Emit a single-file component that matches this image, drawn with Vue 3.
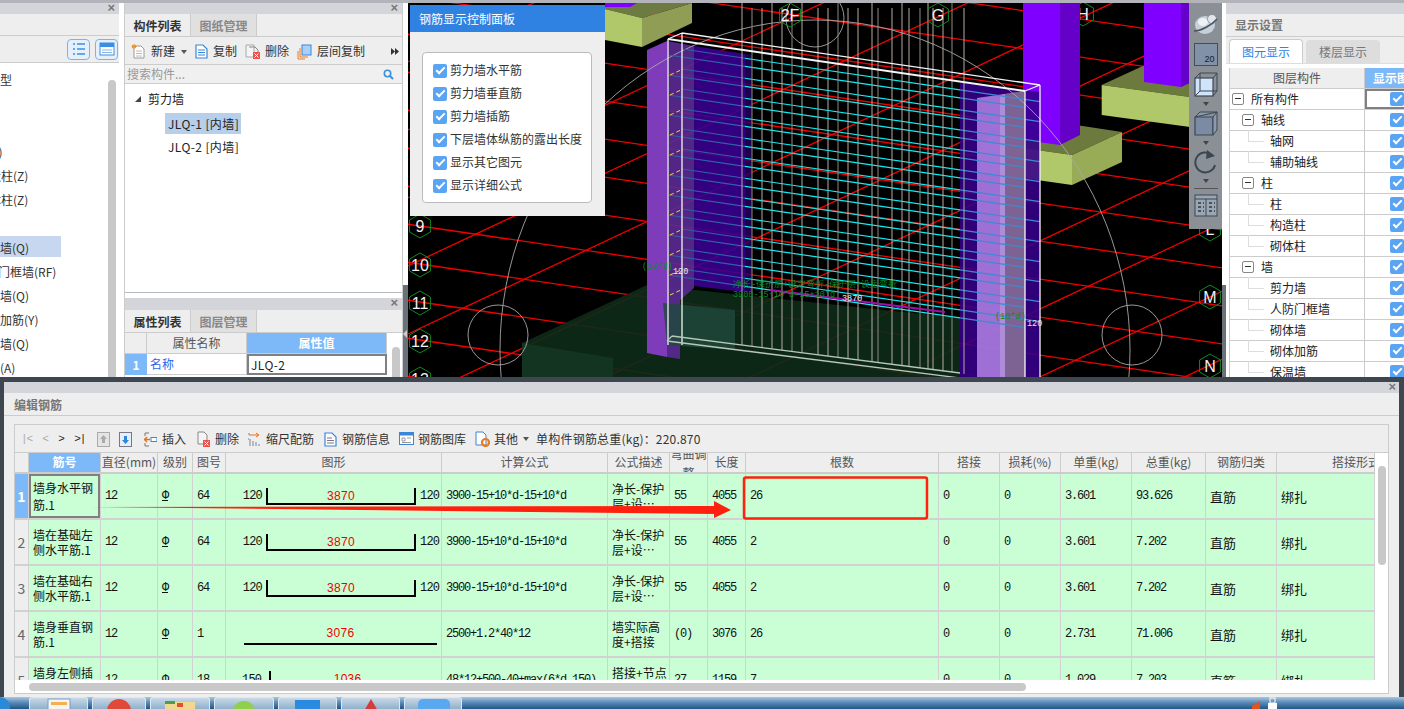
<script setup>
const redA = []
for (let k = -8; k <= 5; k++) redA.push({ y1: 226 + 38 * k + 0.147 * (408 - 420), y2: 226 + 38 * k + 0.147 * (1222 - 420) })
const redB = []
for (let k = -15; k <= 3; k++) redB.push({ y1: 297 + 68 * k - 0.47 * (408 - 1210), y2: 297 + 68 * k - 0.47 * (1222 - 1210) })
const hex = (cx, cy, r) => [0, 1, 2, 3, 4, 5].map(i => {
  const a = Math.PI / 3 * i + Math.PI / 6
  return (cx + r * Math.cos(a)).toFixed(1) + ',' + (cy + r * Math.sin(a)).toFixed(1)
}).join(' ')
const mkLabel = l => ({ ...l, pts: hex(l.x, l.y, 12) })
const labels = [
  { t: '9', x: 420, y: 226 }, { t: '10', x: 420, y: 265 }, { t: '11', x: 420, y: 303 }, { t: '12', x: 420, y: 341 }, { t: '13', x: 420, y: 379 },
  { t: '2F', x: 790, y: 15 }, { t: 'G', x: 938, y: 15 }, { t: 'L', x: 1210, y: 229 }, { t: 'M', x: 1210, y: 297 }, { t: 'N', x: 1210, y: 366 }
].map(mkLabel)
const backLabel = mkLabel({ t: 'H', x: 1083, y: 14 })
const lineAt = (x0, y0, x) => y0 + 0.147 * (x - x0)
const hbars = []
for (let i = 0; i < 12; i++) {
  const set = [{ x: 682, y: 49 + 20 * i, e: 1040 }, { x: 668, y: 55 + 20 * i, e: 1025 }]
  set.forEach(s => {
    hbars.push({ x1: s.x, y1: lineAt(s.x, s.y, s.x), x2: 745, y2: lineAt(s.x, s.y, 745), c: '#2f62a8' })
    hbars.push({ x1: 745, y1: lineAt(s.x, s.y, 745), x2: 960, y2: lineAt(s.x, s.y, 960), c: '#10eef2' })
    hbars.push({ x1: 960, y1: lineAt(s.x, s.y, 960), x2: s.e, y2: lineAt(s.x, s.y, s.e), c: '#3d8ad0' })
  })
}
const vbars = [742, 752, 762, 772, 782, 792, 802, 818, 828, 838, 848, 858, 872, 878, 892, 902, 909, 920, 928, 933, 943, 952, 964].map((x, i) => ({
  x, y1: i % 3 === 0 ? 3 : 8, y2: 345 + (x - 742) * 0.13, c: i % 4 === 1 ? '#8f8a80' : '#b5ad9f'
}))
const ticks = Array.from({ length: 12 }, (_, i) => 73 + 20 * i)

const leftRows = [
  { t: '常用构件类型', m: -60 }, { t: '' }, { t: '' }, { t: '轴网(J)', m: -36 },
  { t: '构造柱(Z)', m: -23 }, { t: '砌体柱(Z)', m: -23 }, { t: '' },
  { t: '剪力墙(Q)', m: -24, sel: true }, { t: '人防门框墙(RF)', m: -26 }, { t: '砌体墙(Q)', m: -24 },
  { t: '砌体加筋(Y)', m: -24 }, { t: '保温墙(Q)', m: -24 }, { t: '暗梁(A)', m: -24 }
]
const panelChecks = ['剪力墙水平筋', '剪力墙垂直筋', '剪力墙插筋', '下层墙体纵筋的露出长度', '显示其它图元', '显示详细公式']
const layerRows = [
  { t: '所有构件', l: 1, first: true }, { t: '轴线', l: 2 }, { t: '轴网', l: 3 }, { t: '辅助轴线', l: 3 },
  { t: '柱', l: 2 }, { t: '柱', l: 3 }, { t: '构造柱', l: 3 }, { t: '砌体柱', l: 3 }, { t: '墙', l: 2 },
  { t: '剪力墙', l: 3 }, { t: '人防门框墙', l: 3 }, { t: '砌体墙', l: 3 }, { t: '砌体加筋', l: 3 }, { t: '保温墙', l: 3 }
]
const cols = [14, 72, 57, 35, 33, 216, 166, 62, 38, 38, 193, 61, 61, 71, 74, 71, 98]
const heads = ['', '筋号', '直径(mm)', '级别', '图号', '图形', '计算公式', '公式描述', '弯曲调整', '长度', '根数', '搭接', '损耗(%)', '单重(kg)', '总重(kg)', '钢筋归类', '搭接形式']
const rows = [
  { n: 1, name: ['墙身水平钢', '筋.1'], fig: 64, shape: 'u', len: '3870', f: '3900-15+10*d-15+10*d', d: ['净长-保护', '层+设…'], b: '55', l: '4055', c: '26', u: '3.601', tot: '93.626' },
  { n: 2, name: ['墙在基础左', '侧水平筋.1'], fig: 64, shape: 'u', len: '3870', f: '3900-15+10*d-15+10*d', d: ['净长-保护', '层+设…'], b: '55', l: '4055', c: '2', u: '3.601', tot: '7.202' },
  { n: 3, name: ['墙在基础右', '侧水平筋.1'], fig: 64, shape: 'u', len: '3870', f: '3900-15+10*d-15+10*d', d: ['净长-保护', '层+设…'], b: '55', l: '4055', c: '2', u: '3.601', tot: '7.202' },
  { n: 4, name: ['墙身垂直钢', '筋.1'], fig: 1, shape: 'l', len: '3076', f: '2500+1.2*40*12', d: ['墙实际高', '度+搭接'], b: '(0)', l: '3076', c: '26', u: '2.731', tot: '71.006' },
  { n: 5, name: ['墙身左侧插', '筋.1'], fig: 18, shape: 'h', len: '1036', f: '48*12+500-40+max(6*d,150)', d: ['搭接+节点', '设置…'], b: '27', l: '1159', c: '7', u: '1.029', tot: '7.203' }
]
const taskBtns = [59, 54, 60, 60, 59, 59, 58]
</script>

<template>
  <div class="app">
    <div class="top">
      <!-- left navigation panel (cut by the window edge) -->
      <section class="left">
        <div class="bar"><span class="close">×</span></div>
        <div class="blank-row"></div>
        <div class="left-tools">
          <span class="blue-btn">
            <svg width="14" height="14" viewBox="0 0 14 14"><g fill="none" stroke="#3a8ee6" stroke-width="1.3"><path d="M1 2h2M5 2h8M1 7h2M5 7h8M1 12h2M5 12h8"/></g></svg>
          </span>
          <span class="blue-btn">
            <svg width="16" height="14" viewBox="0 0 16 14"><rect x="1" y="1" width="14" height="12" fill="#fff" stroke="#3a8ee6"/><rect x="1" y="1" width="14" height="4" fill="#3a8ee6"/><path d="M3 8h10M3 10.500h10" stroke="#8ab8ea"/></svg>
          </span>
        </div>
        <div class="left-tree">
          <div class="left-list">
            <div v-for="(r, i) in leftRows" :key="i" class="left-row">
              <div class="left-cell" :class="{ sel: r.sel }"><span class="nowrap" :style="{ marginLeft: (r.m || 0) + 'px' }">{{ r.t }}</span></div>
            </div>
          </div>
          <div class="left-scroll"></div>
        </div>
      </section>
      <div class="gap5"></div>

      <!-- component list + attribute list -->
      <section class="mid">
        <div class="bar"><span class="close">×</span></div>
        <div class="tabs">
          <span class="tab on">构件列表</span><span class="tab">图纸管理</span>
        </div>
        <div class="mid-tools">
          <span class="mt new">
            <svg width="15" height="15" viewBox="0 0 15 15"><path d="M3 2h7l3 3v9H3z" fill="#fff" stroke="#999"/><path d="M5 7h6M5 9.500h6M5 12h6" stroke="#bbb"/><path d="M3 0v5M0.500 2.500h5M1 1l4 3M5 1L1 4" stroke="#f09020"/></svg>
            新建<i class="caret"></i>
          </span>
          <span class="mt">
            <svg width="13" height="15" viewBox="0 0 13 15"><path d="M1 1h7l4 4v9H1z" fill="#fff" stroke="#3a86d8" stroke-width="1.2"/><path d="M3 6h7M3 8.500h7M3 11h7" stroke="#3a86d8"/></svg>
            复制
          </span>
          <span class="mt">
            <svg width="15" height="15" viewBox="0 0 15 15"><path d="M1 1h8v12H1z" fill="#f4f4f4" stroke="#aaa"/><path d="M4 3h6l3 3v7" fill="none" stroke="#888"/><rect x="8" y="8" width="7" height="7" fill="#e9534c"/><path d="M9.500 9.500l4 4M13.500 9.500l-4 4" stroke="#fff"/></svg>
            删除
          </span>
          <span class="mt">
            <svg width="15" height="16" viewBox="0 0 15 16"><rect x="5" y="1" width="9" height="10" fill="#a9d0fb" stroke="#3a86d8"/><path d="M3 4v9h8M1 7v8h7" fill="none" stroke="#f07828"/></svg>
            层间复制
          </span>
          <svg class="more" width="8" height="7" viewBox="0 0 8 7"><path d="M0 0l4 3.500L0 7zM4 0l4 3.500L4 7z" fill="#333"/></svg>
        </div>
        <div class="search">
          <span>搜索构件...</span>
          <svg width="11" height="11" viewBox="0 0 11 11"><circle cx="4.500" cy="4.500" r="3.200" fill="none" stroke="#3a90e0" stroke-width="1.600"/><path d="M7 7l3 3" stroke="#3a90e0" stroke-width="2"/></svg>
        </div>
        <div class="mid-tree">
          <div class="tree-row root"><i class="tri"></i>剪力墙</div>
          <div class="tree-row leaf"><span class="hl">JLQ-1 [内墙]</span></div>
          <div class="tree-row leaf"><span class="pl">JLQ-2 [内墙]</span></div>
        </div>
        <div class="split-h"></div>
        <div class="bar attr-bar"><span class="close">×</span></div>
        <div class="tabs">
          <span class="tab on">属性列表</span><span class="tab">图层管理</span>
        </div>
        <div class="attr">
          <div class="attr-grid">
            <div class="ah corner"></div><div class="ah">属性名称</div><div class="ah blue">属性值</div>
            <div class="rn">1</div><div class="ac link">名称</div><div class="ac val">JLQ-2</div>
          </div>
          <div class="attr-scroll"><div class="thumb"></div></div>
        </div>
      </section>

      <div class="splitter"><div class="sp-top"></div><div class="sp-bot"><i class="sp-arrow"></i></div></div>

      <!-- 3D view -->
      <section class="view">
        <svg class="scene" width="814" height="374" viewBox="408 3 814 374">
          <rect x="408" y="3" width="814" height="374" fill="#000"/>
          <g stroke="#f00000" stroke-width="1.300">
            <line v-for="(l, i) in redA" :key="'a' + i" x1="408" :y1="l.y1" x2="1222" :y2="l.y2"/>
            <line v-for="(l, i) in redB" :key="'b' + i" x1="408" :y1="l.y1" x2="1222" :y2="l.y2"/>
          </g>
          <polygon :points="backLabel.pts" fill="none" stroke="#0f8a20" stroke-width="1"/>
          <text :x="backLabel.x" :y="backLabel.y + 6" text-anchor="middle" fill="#f0f0f0" font-family="Liberation Sans, sans-serif" font-size="16">{{ backLabel.t }}</text>
          <!-- olive footings -->
          <polygon points="605,3 692,3 642,18 605,9" fill="#6d7a42"/>
          <polygon points="605,9 642,18 642,47 605,40" fill="#b0c76a"/>
          <polygon points="642,18 692,3 692,23 642,47" fill="#8f9e54"/>
          <polygon points="605,3 637,3 630,7 605,7" fill="#7f00ff"/>
          <polygon points="980,142 1030,118 1122,132 1072,155" fill="#6c7a3e"/>
          <polygon points="980,142 1072,155 1072,185 980,172" fill="#b0c76a"/>
          <polygon points="1072,155 1122,132 1122,162 1072,185" fill="#98ac58"/>
          <polygon points="1101.700,85 1145,65 1190,70 1190,97" fill="#6c7a3e"/>
          <polygon points="1101.700,85 1190,97 1190,127 1101.700,115" fill="#b0c76a"/>
          <!-- purple columns -->
          <polygon points="1023,3 1060,3 1060,145 1023,140" fill="#7f00ff"/>
          <polygon points="1060,3 1080,3 1080,135 1060,145" fill="#6400c8"/>
          <polygon points="1144,3 1181,3 1181,87 1144,82" fill="#7f00ff"/>
          <polygon points="1181,3 1190,3 1190,83 1181,87" fill="#6400c8"/>
          <!-- foundation -->
          <polygon points="522,343 647,285 960,318 960,377 522,377" fill="#0e2a19" opacity="0.92"/>
          <polygon points="522,343 613,358 613,377 522,377" fill="#123420"/>
          <!-- wall volume -->
          <polygon points="694,46 745,54 745,292 694,286" fill="#3a0090" opacity="0.9"/>
          <polygon points="745,54 752,55 752,293 745,292" fill="#250060" opacity="0.8"/>
          <polygon points="647,50 667,41 667,357 647,353" fill="#7e3cba"/>
          <polygon points="667,41 694,46 694,288 680,300 680,359 667,357" fill="#5b2a93" opacity="0.9"/>
          <polygon points="663,303 735,310 735,350 667,345" fill="#1f4a3c" opacity="0.8"/>
          <polygon points="960,82 1040,92 1040,377 960,377" fill="#35008a" opacity="0.88"/>
          <polygon points="977,98 1025,91 1025,377 977,377" fill="#b284e6" opacity="0.85"/>
          <polygon points="1000,95 1005,94 1005,377 1000,377" fill="#c0a8d8" opacity="0.5"/>
          <polygon points="1005,94 1025,91 1025,377 1005,377" fill="#6b5a70" opacity="0.65"/>
          <!-- arc and circles -->
          <g fill="none" stroke="#a8a8a8" stroke-width="0.900">
            <ellipse cx="815" cy="350" rx="315" ry="330"/>
            <circle cx="498" cy="335" r="30"/>
            <circle cx="1132" cy="335" r="30"/>
            <circle cx="815" cy="18" r="29"/>
          </g>
          <!-- rebars -->
          <g stroke-width="1.200">
            <line v-for="(b, i) in hbars" :key="'h' + i" :x1="b.x1" :y1="b.y1" :x2="b.x2" :y2="b.y2" :stroke="b.c"/>
          </g>
          <g stroke-width="1">
            <line v-for="(b, i) in vbars" :key="'v' + i" :x1="b.x" :y1="b.y1" :x2="b.x" :y2="b.y2" :stroke="b.c"/>
          </g>
          <g stroke="#f0e020" stroke-width="1" stroke-dasharray="4 3">
            <line v-for="t in ticks" :key="'t' + t" x1="670" :y1="t + 2" x2="681" :y2="t - 3"/>
          </g>
          <!-- wall frame -->
          <g fill="none" stroke="#f4f4f4" stroke-width="1.300">
            <path d="M682 33L1040 85M1040 85V377M1025 91V377M668 39V345M682 33V345M668 39L682 33M1025 91L1040 85"/>
            <path d="M668 39L1025 91" stroke-width="2"/>
          </g>
          <g fill="none" stroke="#b8c8b8" stroke-width="1.300">
            <path d="M667 341L960 378M672 336L960 373M667 341L672 336"/>
          </g>
          <line x1="770" y1="290" x2="945" y2="312" stroke="#a010a8" stroke-width="2"/>
          <!-- dimension texts -->
          <g font-family="Liberation Mono, monospace" font-size="8.500">
            <text x="642" y="269" fill="#0c8a20">(10*d)</text>
            <text x="673" y="274" fill="#e8e8e8">120</text>
            <text x="733" y="287" fill="#0c8a20">净长-保护层+设定弯折-保护层+设定弯折</text>
            <text x="733" y="297" fill="#0c8a20">3900-15+10*d-15+10*d</text>
            <text x="842" y="301" fill="#e8e8e8">3870</text>
            <text x="995" y="319" fill="#0c8a20">(10*d)</text>
            <text x="1027" y="326" fill="#e8e8e8">120</text>
          </g>
          <!-- axis labels -->
          <g v-for="l in labels" :key="l.t">
            <polygon :points="l.pts" fill="none" stroke="#0f8a20" stroke-width="1"/>
            <text :x="l.x" :y="l.y + 6" text-anchor="middle" fill="#f0f0f0" font-family="Liberation Sans, sans-serif" font-size="16">{{ l.t }}</text>
          </g>
        </svg>

        <!-- floating rebar control panel -->
        <div class="float">
          <div class="float-title">钢筋显示控制面板</div>
          <div class="float-body">
            <div class="float-box">
              <label v-for="c in panelChecks" :key="c" class="fc"><span class="cb"></span>{{ c }}</label>
            </div>
          </div>
        </div>

        <!-- floating view toolbar -->
        <div class="vt">
          <svg width="24" height="22" viewBox="0 0 24 22"><ellipse cx="11" cy="12" rx="10" ry="9" fill="#c6d0da"/><ellipse cx="9" cy="9" rx="5" ry="4" fill="#eef2f6"/><circle cx="18" cy="6" r="4.500" fill="#dfe5ec" stroke="#6d7680" stroke-width="0.600"/><path d="M0 18C7 18 18 12 23 6" fill="none" stroke="#4a5560" stroke-width="1.500"/></svg>
          <div class="vt-square">20</div>
          <svg width="24" height="25" viewBox="0 0 24 25"><rect x="1" y="6" width="18" height="18" fill="#cfe3fb" stroke="#3c4650" stroke-width="1.200"/><path d="M1 6L6 1H23V19L19 24M19 6L23 1M6 1V19H23M1 24L6 19" fill="none" stroke="#3c4650" stroke-width="1"/></svg>
          <i class="vt-caret"></i>
          <svg width="24" height="25" viewBox="0 0 24 25"><path d="M1 6H19V24H1z" fill="#7b8ba3" stroke="#3c4650" stroke-width="1.200"/><path d="M1 6L6 1H23V19L19 24V6L23 1z" fill="#8b9ab0" stroke="#3c4650" stroke-width="1"/></svg>
          <i class="vt-caret"></i>
          <svg width="24" height="24" viewBox="0 0 24 24"><path d="M18 5A10 10 0 1 0 21 15" fill="none" stroke="#3c4650" stroke-width="2"/><path d="M13 0l8 6-9 3z" fill="#3c4650"/></svg>
          <i class="vt-caret"></i>
          <div class="vt-sep"></div>
          <svg width="24" height="23" viewBox="0 0 24 23"><rect x="1" y="1" width="22" height="21" fill="#9aa6b4" stroke="#3c4650"/><path d="M1 5H23M12 5V22" stroke="#3c4650"/><path d="M4 9h3M4 13h3M4 17h3M9 9h1M9 13h1M9 17h1M15 9h3M15 13h3M15 17h3M20 9h1M20 13h1M20 17h1" stroke="#2e3840" stroke-width="1.300"/></svg>
        </div>
      </section>

      <div class="splitter thin"><div class="sp-top"></div><div class="sp-bot"></div></div>

      <!-- display settings -->
      <section class="right">
        <div class="bar"></div>
        <div class="r-title">显示设置</div>
        <div class="r-tabs">
          <span class="r-tab on">图元显示</span><span class="r-tab">楼层显示</span>
        </div>
        <div class="r-table">
          <div class="r-row head"><div class="r-c1">图层构件</div><div class="r-c2 blue">显示图元</div></div>
          <div v-for="(r, i) in layerRows" :key="i" class="r-row">
            <div class="r-c1" :class="'lv' + r.l">
              <i v-if="r.l < 3" class="pm"></i>
              <span>{{ r.t }}</span>
            </div>
            <div class="r-c2" :class="{ act: r.first }"><span class="cb"></span></div>
          </div>
        </div>
      </section>
    </div>

    <!-- rebar editor dialog -->
    <section class="dlg">
      <div class="bar"><span class="close d-close">×</span></div>
      <div class="d-title">编辑钢筋</div>
      <div class="d-box">
        <div class="d-tools">
          <div class="nav"><span class="dim1">|&lt;</span><span class="dim1">&lt;</span><span>&gt;</span><span>&gt;|</span></div>
          <svg class="ti first" width="13" height="15" viewBox="0 0 13 15"><rect x="0.500" y="0.500" width="12" height="14" fill="#e4e4e4" stroke="#aaa"/><path d="M6.500 3L3 7h2v4h3V7h2z" fill="#aaa"/></svg>
          <svg class="ti" width="13" height="15" viewBox="0 0 13 15"><rect x="0.500" y="0.500" width="12" height="14" fill="#e8eef6" stroke="#778"/><path d="M6.500 12L3 8h2V4h3v4h2z" fill="#2a86e0"/></svg>
          <span class="ti-item insert">
            <svg width="13" height="15" viewBox="0 0 13 15"><path d="M5 1H1M5 14H1M1 1v3M1 11v3" stroke="#777" fill="none"/><path d="M6 7.500H1M3 5L0.500 7.500 3 10" stroke="#f07010" stroke-width="1.400" fill="none"/><rect x="7" y="5.500" width="6" height="4" fill="#fff" stroke="#3a86d8"/></svg>
            插入
          </span>
          <span class="ti-item del">
            <svg width="13" height="16" viewBox="0 0 13 16"><path d="M1 1h6l3 3v9H1z" fill="#f4f4f4" stroke="#888"/><rect x="6" y="9" width="7" height="7" fill="#e9534c"/><path d="M7.500 10.500l4 4M11.500 10.500l-4 4" stroke="#fff"/></svg>
            删除
          </span>
          <span class="ti-item">
            <svg width="13" height="15" viewBox="0 0 13 15"><path d="M1 3h9M8 1l3 2-3 2" stroke="#f07010" fill="none"/><path d="M1 1v2M2 7v7M5 9v5M8 10v4M11 12v2" stroke="#8a98a8" stroke-width="1.200"/><path d="M0 6v2" stroke="#3a86d8"/></svg>
            缩尺配筋
          </span>
          <span class="ti-item info">
            <svg width="13" height="15" viewBox="0 0 13 15"><path d="M1 1h7l4 4v9H1z" fill="#fff" stroke="#3a86d8" stroke-width="1.2"/><path d="M3 6h5M3 8.500h7M3 11h7" stroke="#778"/></svg>
            钢筋信息
          </span>
          <span class="ti-item wide">
            <svg width="15" height="13" viewBox="0 0 15 13"><rect x="0.500" y="0.500" width="14" height="12" fill="#fff" stroke="#3a86d8"/><rect x="0.500" y="0.500" width="14" height="3" fill="#3a86d8"/><path d="M3 6h3v3H3zM8 6h4M3 10.500h9" stroke="#999" fill="none"/></svg>
            钢筋图库
          </span>
          <span class="ti-item wide">
            <svg width="15" height="16" viewBox="0 0 15 16"><path d="M1 1h7l3 3v10H1z" fill="#fff" stroke="#3a86d8"/><circle cx="10.500" cy="11.500" r="3.500" fill="none" stroke="#f07818" stroke-width="2.200"/></svg>
            其他
          </span>
          <i class="caret"></i>
          <span class="total">单构件钢筋总重(kg)：220.870</span>
        </div>

        <div class="d-grid">
          <div class="t-view">
            <table class="tb">
              <colgroup><col v-for="(w, i) in cols" :key="i" :style="{ width: w + 'px' }"></colgroup>
              <thead>
                <tr>
                  <th v-for="(h, i) in heads" :key="i" :class="{ blue: i === 1 }">
                    <div class="th-in" :class="{ tall: i === 8, rshift: i === 16 }">{{ h }}</div>
                  </th>
                </tr>
              </thead>
              <tbody>
                <tr v-for="r in rows" :key="r.n">
                  <td class="rn" :class="{ cur: r.n === 1 }">{{ r.n }}</td>
                  <td class="cn" :class="{ active: r.n === 1 }"><div>{{ r.name[0] }}</div><div>{{ r.name[1] }}</div></td>
                  <td class="m">12</td>
                  <td class="m"><span class="grade">Φ</span></td>
                  <td class="m">{{ r.fig }}</td>
                  <td class="shape">
                    <div v-if="r.shape === 'u'" class="sh-u">
                      <span class="m-n">120</span>
                      <div class="bracket"><span class="red">{{ r.len }}</span></div>
                      <span class="m-n">120</span>
                    </div>
                    <div v-else-if="r.shape === 'l'" class="sh-l"><span class="red">{{ r.len }}</span></div>
                    <div v-else class="sh-h">
                      <span class="m-n">150</span>
                      <div class="hook"><span class="red">{{ r.len }}</span></div>
                    </div>
                  </td>
                  <td class="m">{{ r.f }}</td>
                  <td class="cn"><div>{{ r.d[0] }}</div><div>{{ r.d[1] }}</div></td>
                  <td class="m">{{ r.b }}</td>
                  <td class="m">{{ r.l }}</td>
                  <td class="m">{{ r.c }}</td>
                  <td class="m">0</td>
                  <td class="m">0</td>
                  <td class="m">{{ r.u }}</td>
                  <td class="m">{{ r.tot }}</td>
                  <td class="cn big">直筋</td>
                  <td class="cn big">绑扎</td>
                </tr>
              </tbody>
            </table>
            <!-- hand-drawn annotation over the table -->
            <svg class="note" width="1360" height="227" viewBox="15 453 1360 227">
              <path d="M91 507L714 506V501L731 510L714 518V514Z" fill="#ff2010"/>
              <rect x="744" y="477.500" width="183" height="41" rx="2" fill="none" stroke="#ff2010" stroke-width="2.500"/>
            </svg>
          </div>
          <div class="v-scroll"><div class="v-thumb"></div></div>
        </div>
        <div class="h-scroll"><div class="h-thumb"></div></div>
      </div>
    </section>

    <!-- taskbar -->
    <footer class="task">
      <i class="orb"></i>
      <div class="t-btns">
        <div v-for="(w, i) in taskBtns" :key="i" class="t-btn" :style="{ width: w + 'px' }">
          <svg width="50" height="12" viewBox="0 0 50 12">
            <g v-if="i === 0"><rect x="14" y="1" width="22" height="14" fill="#f4f4f4" stroke="#7aa0c4"/><rect x="17" y="4" width="16" height="3" fill="#f5b04c"/></g>
            <circle v-else-if="i === 1" cx="25" cy="13" r="12" fill="#e0493a"/>
            <g v-else-if="i === 2"><rect x="10" y="4" width="30" height="10" fill="#f0d890"/><rect x="10" y="3" width="10" height="3" fill="#48a048"/><rect x="22" y="5" width="6" height="4" fill="#e05030"/></g>
            <circle v-else-if="i === 3" cx="25" cy="14" r="11" fill="#8ed04a"/>
            <rect v-else-if="i === 4" x="12" y="2" width="25" height="12" fill="#2a8ae0"/>
            <path v-else-if="i === 5" d="M25 1L18 13H32Z" fill="#d83a3a"/>
            <rect v-else x="10" y="1" width="32" height="14" rx="5" fill="#5aa8f0"/>
          </svg>
        </div>
      </div>
      <div class="tray">
        <svg width="30" height="12" viewBox="0 0 30 12"><path d="M0 9L8 4V12H0z" fill="#e8501c"/><rect x="18" y="1" width="5" height="5" fill="none" stroke="#fff"/><rect x="16" y="6" width="9" height="6" fill="#fff"/></svg>
      </div>
    </footer>
  </div>
</template>

<style scoped>
.app {
  width: 1404px;
  height: 709px;
  overflow: hidden;
  display: flex;
  flex-direction: column;
  background: #fff;
  font: 12px/1.2 "Noto Sans CJK SC", "Liberation Sans", sans-serif;
  color: #222;
}
.nowrap { white-space: nowrap; }
.top {
  height: 377px;
  flex: none;
  display: flex;
  border-top: 3px solid #b2b4b9;
  box-sizing: border-box;
  overflow: hidden;
}
.bar {
  height: 11px;
  flex: none;
  background: #d4d5da;
  position: relative;
}
.close {
  position: absolute;
  right: 4px;
  top: -3px;
  color: #777;
  font: bold 13px/16px "Liberation Sans", sans-serif;
}
.gap5 { width: 5px; flex: none; background: #fff; }

/* left panel */
.left { width: 119px; flex: none; display: flex; flex-direction: column; background: #fff; }
.blank-row { height: 21px; flex: none; background: #eee; border-bottom: 1px solid #ccc; }
.left-tools {
  height: 27px;
  flex: none;
  box-sizing: border-box;
  background: #eee;
  border-bottom: 1px solid #ccc;
  display: flex;
  justify-content: flex-end;
  align-items: center;
  gap: 5px;
  padding-right: 1px;
}
.blue-btn {
  width: 23px;
  height: 21px;
  box-sizing: border-box;
  border: 1px solid #7ab4ee;
  border-radius: 4px;
  background: #e6f0fb;
  display: flex;
  align-items: center;
  justify-content: center;
}
.left-tree { flex: 1; display: flex; overflow: hidden; padding-top: 3px; }
.left-list { width: 108px; overflow: hidden; }
.left-row { height: 24px; display: flex; align-items: center; }
.left-cell { height: 21px; line-height: 23px; overflow: hidden; width: 108px; font-size: 12px; color: #333; }
.left-cell.sel { width: 61px; background: #c6d7ef; }
.left-scroll { width: 8px; height: 300px; margin-top: 14px; border-radius: 4px; background: #c8c8c8; }

/* middle panel */
.mid { width: 279px; flex: none; display: flex; flex-direction: column; box-sizing: border-box; border-left: 1px solid #ccc; border-right: 1px solid #ccc; background: #eee; }
.tabs { height: 23px; flex: none; box-sizing: border-box; display: flex; border-bottom: 1px solid #ccc; background: #eee; }
.tab { width: 65px; text-align: center; line-height: 23px; background: #e0e0e0; color: #888; font-weight: 700; border-right: 1px solid #ccc; }
.tab.on { background: #eee; color: #333; }
.mid-tools { height: 28px; flex: none; box-sizing: border-box; border-bottom: 1px solid #ccc; display: flex; align-items: center; padding: 2px 0 0 6px; gap: 8px; position: relative; color: #333; }
.mt { display: flex; align-items: center; gap: 5px; white-space: nowrap; }
.caret { display: inline-block; width: 0; height: 0; border: 3px solid transparent; border-top: 4px solid #555; border-bottom: 0; }
.mt .caret { margin-left: 1px; }
.more { margin-left: auto; margin-right: 3px; }
.search { height: 19px; flex: none; box-sizing: border-box; border-bottom: 1px solid #ccc; display: flex; align-items: center; justify-content: space-between; padding: 1px 8px 0 2px; color: #999; background: #f0f0f0; }
.mid-tree { height: 209px; flex: none; box-sizing: border-box; background: #fff; border-bottom: 1px solid #bbb; padding-top: 3px; }
.tree-row { height: 24px; display: flex; align-items: center; color: #222; }
.root { padding-left: 10px; }
.tri { width: 0; height: 0; border-left: 6px solid transparent; border-bottom: 6px solid #444; margin-right: 7px; }
.leaf { padding-left: 40px; }
.hl { display: block; width: 76px; height: 21px; line-height: 21px; background: #b6cfeb; padding-left: 3px; box-sizing: border-box; white-space: nowrap; letter-spacing: 0.400px; }
.pl { padding-left: 3px; white-space: nowrap; letter-spacing: 0.400px; }
.split-h { height: 5px; flex: none; background: #fff; }
.attr-bar { height: 12px; }
.attr { flex: 1; display: flex; background: #fff; overflow: hidden; }
.attr-grid { display: grid; grid-template-columns: 22px 100px 140px; grid-auto-rows: 21px; }
.ah { background: #eee; text-align: center; line-height: 20px; color: #555; border-right: 1px solid #ccc; border-bottom: 1px solid #ccc; }
.ah.blue { background: #7db8f8; color: #fff; font-weight: 700; }
.rn { background: #7db8f8; color: #fff; font-weight: 700; text-align: center; line-height: 21px; }
.ac { padding-left: 3px; line-height: 20px; border-bottom: 1px solid #ccc; }
.link { color: #2a66f0; border-right: 1px solid #ccc; }
.val { border: 2px solid #808080; padding-left: 2px; line-height: 17px; color: #222; letter-spacing: 0.400px; }
.attr-scroll { flex: 1; background: #fff; padding: 14px 0 0 5px; }
.thumb { width: 8px; height: 60px; border-radius: 4px; background: #c8c8c8; }

/* splitters */
.splitter { width: 5px; flex: none; display: flex; flex-direction: column; }
.splitter.thin { width: 4px; }
.sp-top { height: 282px; background: #fff; }
.sp-bot { flex: 1; background: #6b7178; position: relative; }
.sp-arrow { position: absolute; left: 0; top: 45px; border: 4px solid transparent; border-right: 4px solid #ccc; border-left: 0; }

/* canvas */
.view { width: 814px; flex: none; position: relative; background: #000; overflow: hidden; }
.scene { display: block; }
.float { position: absolute; left: 2px; top: 2px; width: 195px; height: 211px; display: flex; flex-direction: column; background: #eee; }
.float-title { height: 27px; flex: none; line-height: 27px; padding-left: 9px; color: #fff; background: #2f82e2; font-size: 12px; }
.float-body { padding: 20px 13px 0 12px; }
.float-box { height: 151px; box-sizing: border-box; padding-top: 6px; background: #fff; border: 1px solid #bbb; border-radius: 4px; }
.fc { display: flex; align-items: center; height: 23px; padding-left: 10px; gap: 3px; color: #333; white-space: nowrap; }
.cb { position: relative; display: inline-block; flex: none; width: 14px; height: 14px; border-radius: 2px; background: #5aa4f4; }
.cb::after { content: ""; position: absolute; left: 3px; top: 3px; width: 7px; height: 3px; border-left: 2px solid #fff; border-bottom: 2px solid #fff; transform: rotate(-45deg); }
.vt { position: absolute; left: 781px; top: 0; width: 33px; height: 226px; box-sizing: border-box; padding-top: 10px; background: #8b9097; display: flex; flex-direction: column; align-items: center; }
.vt svg { flex: none; }
.vt-square { width: 24px; height: 23px; margin: 8px 0 6px; box-sizing: border-box; border: 1px solid #444e58; background: #8191a8; color: #222; font: 9px/30px "Liberation Sans", sans-serif; text-align: right; padding-right: 2px; flex: none; }
.vt-caret { width: 0; height: 0; border: 3px solid transparent; border-top: 4px solid #444; border-bottom: 0; margin: 5px 0; flex: none; }
.vt-sep { width: 24px; height: 1px; background: #555; margin: 0 0 5px; flex: none; }

/* right panel */
.right { flex: 1; min-width: 0; display: flex; flex-direction: column; background: #fff; overflow: hidden; }
.r-title { height: 22px; flex: none; background: #eee; border-bottom: 1px solid #ccc; line-height: 22px; padding-left: 9px; color: #777; font-weight: 700; }
.r-tabs { height: 27px; flex: none; box-sizing: border-box; display: flex; align-items: flex-end; padding-left: 3px; gap: 3px; background: #eee; border-bottom: 1px solid #ddd; }
.r-tab { width: 74px; height: 23px; line-height: 23px; text-align: center; color: #777; background: #ddd; border-radius: 4px 4px 0 0; }
.r-tab.on { background: #fff; color: #2a86e6; border: 1px solid #ccc; border-bottom: 0; height: 24px; box-sizing: border-box; }
.r-table { margin: 4px 0 0 3px; border-left: 1px solid #ccc; flex: 1; overflow: hidden; }
.r-row { display: flex; height: 21px; box-sizing: border-box; border-bottom: 1px solid #ccc; white-space: nowrap; }
.r-c1 { width: 135px; flex: none; box-sizing: border-box; border-right: 1px solid #ccc; display: flex; align-items: center; position: relative; color: #222; }
.r-c2 { flex: 1; display: flex; align-items: center; padding-left: 25px; overflow: hidden; }
.head .r-c1 { justify-content: center; color: #555; background: #eee; }
.head .r-c2 { background: #7db8f8; color: #fff; font-weight: 700; padding-left: 8px; }
.r-c2.act { box-shadow: inset 2px 2px 0 #808080, inset 0 -2px 0 #808080; }
.pm { width: 12px; height: 12px; flex: none; box-sizing: border-box; border: 1px solid #888; border-radius: 2px; position: relative; margin-right: 7px; }
.pm::after { content: ""; position: absolute; left: 2px; right: 2px; top: 4px; height: 1px; background: #333; }
.lv1 { padding-left: 2px; }
.lv2 { padding-left: 12px; }
.lv3 { padding-left: 40px; }
.lv3::before { content: ""; position: absolute; left: 18px; top: 10px; width: 16px; height: 1px; background: #ddd; }
.lv3::after { content: ""; position: absolute; left: 18px; top: -1px; width: 1px; height: 12px; background: #ddd; }

/* dialog */
.dlg {
  height: 320px;
  flex: none;
  box-sizing: border-box;
  border: solid #3e4750;
  border-width: 5px 5px 0 4px;
  background: #eee;
  display: flex;
  flex-direction: column;
}
.d-close { right: 3px; }
.d-title { height: 23px; flex: none; box-sizing: border-box; border-bottom: 1px solid #ccc; line-height: 24px; padding-left: 10px; color: #777; font-weight: 700; }
.d-box { margin: 8px 10px 3px; height: 270px; box-sizing: border-box; border: 1px solid #ccc; background: #fff; display: flex; flex-direction: column; }
.d-tools { height: 28px; flex: none; box-sizing: border-box; background: #eee; border-bottom: 1px solid #ccc; display: flex; align-items: center; padding: 1px 0 0 6px; gap: 9px; color: #333; white-space: nowrap; }
.nav { display: flex; gap: 10px; font: 11px/14px "Liberation Mono", monospace; letter-spacing: -1px; width: 66px; color: #222; }
.nav span { min-width: 6px; }
.dim1 { color: #aaa; }
.ti { flex: none; }
.ti.first { margin-left: 1px; }
.ti-item { display: flex; align-items: center; gap: 5px; }
.ti-item.insert { margin-left: 3px; }
.ti-item.del { margin-left: 2px; }
.ti-item.info { margin-left: 1px; }
.ti-item.wide { gap: 4px; }
.d-tools .caret { margin-left: -4px; }
.total { margin-left: -2px; color: #333; letter-spacing: 0.200px; }

.d-grid { height: 227px; flex: none; display: flex; }
.t-view { width: 1360px; height: 227px; flex: none; overflow: hidden; position: relative; }
.tb { width: 1360px; table-layout: fixed; border-collapse: separate; border-spacing: 0; }
.tb th { height: 19px; padding: 0; background: #eee; font-weight: 400; color: #555; border-right: 1px solid #ccc; border-bottom: 2px solid #ccc; box-sizing: content-box; }
.th-in { height: 19px; display: flex; align-items: center; justify-content: center; overflow: hidden; white-space: nowrap; }
.th-in.tall { white-space: normal; line-height: 19px; text-align: center; }
.th-in.rshift { justify-content: flex-start; padding-left: 55px; }
.tb th.blue { background: #7db8f8; color: #fff; font-weight: 700; }
.tb td {
  height: 44px;
  padding: 0 0 0 4px;
  background: #caffd6;
  color: #111;
  border-right: 1px solid #d2d2d2;
  border-bottom: 2px solid #d2d2d2;
  overflow: hidden;
  white-space: nowrap;
}
.tb td.rn { padding: 0; background: #eee; color: #666; font-weight: 400; text-align: center; font-size: 14px; }
.tb td.rn.cur { background: #7db8f8; color: #fff; font-weight: 700; }
.tb td.cn { line-height: 15px; }
.tb td.cn.active { box-shadow: inset 0 0 0 2px #808080; line-height: 17px; }
.tb td.big { font-size: 13px; }
.tb td.m { font: 12px/14px "Liberation Mono", monospace; letter-spacing: -1.200px; }
.grade { text-decoration: underline; font-size: 12px; }
.tb td.shape { padding: 0; }
.sh-u { display: flex; align-items: center; justify-content: center; gap: 4px; padding-left: 15px; }
.m-n { font: 12px "Liberation Mono", monospace; letter-spacing: -0.800px; }
.red { color: #f00000; font: 12px "Liberation Sans", sans-serif; letter-spacing: 0.300px; }
.bracket { width: 150px; height: 17px; box-sizing: border-box; border: 2px solid #000; border-top: 0; text-align: center; line-height: 14px; }
.sh-l { margin: 0 4px 0 18px; height: 22px; box-sizing: border-box; border-bottom: 2px solid #000; text-align: center; line-height: 18px; }
.sh-h { display: flex; align-items: center; padding-left: 16px; }
.hook { margin: 0 17px 0 8px; flex: 1; height: 18px; border-left: 2px solid #000; text-align: center; line-height: 14px; }
.note { position: absolute; left: 0; top: 0; pointer-events: none; }
.v-scroll { flex: 1; background: #fff; padding: 13px 0 0 3px; }
.v-thumb { width: 8px; height: 99px; border-radius: 4px; background: #c8c8c8; }
.h-scroll { height: 13px; flex: none; background: #fff; padding: 3px 0 0 14px; box-sizing: border-box; }
.h-thumb { width: 997px; height: 8px; border-radius: 4px; background: #c8c8c8; }

/* taskbar */
.task { flex: 1; display: flex; background: linear-gradient(#a9c6e2, #5b8cb8 45%, #1e5686); overflow: hidden; }
.orb { width: 10px; height: 12px; flex: none; border-radius: 0 10px 0 0; background: #2a8ad8; }
.t-btns { display: flex; gap: 4px; margin-left: 19px; }
.t-btn { height: 12px; box-sizing: border-box; border: 1px solid #dfe8f2; border-bottom: 0; border-radius: 3px 3px 0 0; background: linear-gradient(#c9d8e6, #8fb0cc); display: flex; justify-content: center; overflow: hidden; }
.t-btn svg { flex: none; }
.tray { margin-left: auto; margin-right: 122px; }
</style>
